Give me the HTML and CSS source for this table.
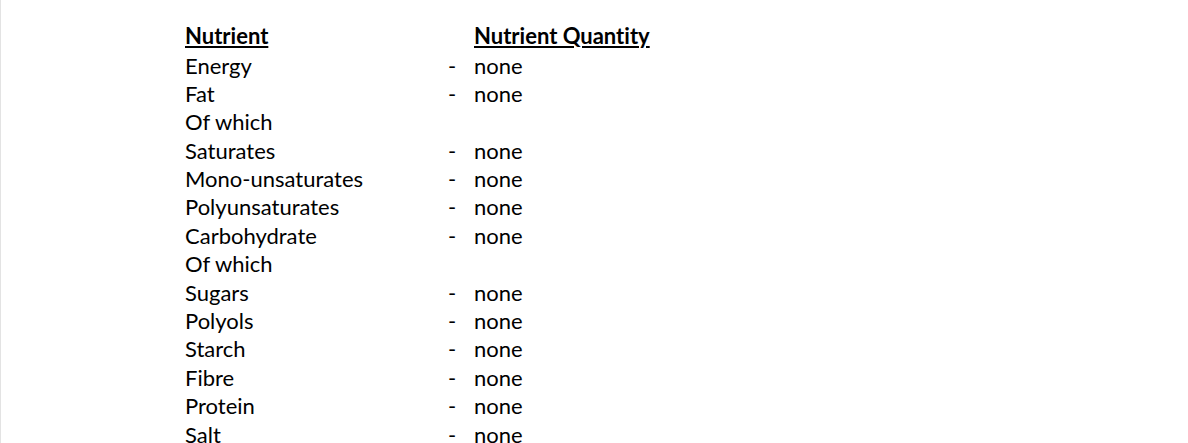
FILE: index.html
```html
<!DOCTYPE html>
<html>
<head>
<meta charset="utf-8">
<link rel="stylesheet" href="styles.css">
</head>
<body>
<div class="page">
  <div class="table">
    <div class="row head"><span class="name">Nutrient</span><span class="dash"></span><span class="qty">Nutrient Quantity</span></div>
    <div class="row"><span class="name">Energy</span><span class="dash">-</span><span class="qty">none</span></div>
    <div class="row"><span class="name">Fat</span><span class="dash">-</span><span class="qty">none</span></div>
    <div class="row"><span class="name">Of which</span><span class="dash"></span><span class="qty"></span></div>
    <div class="row"><span class="name">Saturates</span><span class="dash">-</span><span class="qty">none</span></div>
    <div class="row"><span class="name">Mono-unsaturates</span><span class="dash">-</span><span class="qty">none</span></div>
    <div class="row"><span class="name">Polyunsaturates</span><span class="dash">-</span><span class="qty">none</span></div>
    <div class="row"><span class="name">Carbohydrate</span><span class="dash">-</span><span class="qty">none</span></div>
    <div class="row"><span class="name">Of which</span><span class="dash"></span><span class="qty"></span></div>
    <div class="row"><span class="name">Sugars</span><span class="dash">-</span><span class="qty">none</span></div>
    <div class="row"><span class="name">Polyols</span><span class="dash">-</span><span class="qty">none</span></div>
    <div class="row"><span class="name">Starch</span><span class="dash">-</span><span class="qty">none</span></div>
    <div class="row"><span class="name">Fibre</span><span class="dash">-</span><span class="qty">none</span></div>
    <div class="row"><span class="name">Protein</span><span class="dash">-</span><span class="qty">none</span></div>
    <div class="row"><span class="name">Salt</span><span class="dash">-</span><span class="qty">none</span></div>
  </div>
</div>
</body>
</html>
```
FILE: styles.css
```css
html, body {
  margin: 0;
  padding: 0;
  background: #ffffff;
}
.page {
  height: 443px;
  overflow: hidden;
  border-left: 1px solid #e3e3e3;
  padding: 22px 0 0 184px;
  box-sizing: border-box;
  font-family: "Lato", "Open Sans", sans-serif;
  font-size: 22px;
  font-variant-ligatures: none;
  color: #000;
}
.table {
  display: flex;
  flex-direction: column;
}
.row {
  display: grid;
  grid-template-columns: 263px 26px auto;
  height: 28.4px;
  line-height: 28.4px;
}
.row.head {
  font-weight: bold;
  height: 29.5px;
}
.row.head .name, .row.head .qty {
  text-decoration: underline;
  text-decoration-thickness: 2px;
  text-underline-offset: 2px;
}
```
